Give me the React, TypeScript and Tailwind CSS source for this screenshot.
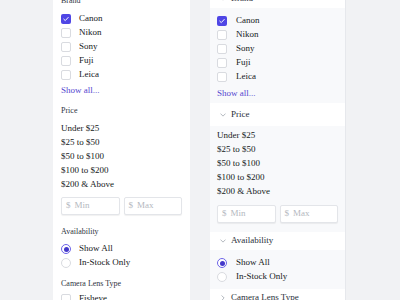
import type { ReactNode } from 'react'

const brands = ['Canon', 'Nikon', 'Sony', 'Fuji', 'Leica']
const prices = ['Under $25', '$25 to $50', '$50 to $100', '$100 to $200', '$200 & Above']

function Checkbox({ checked }: { checked?: boolean }) {
  return checked ? (
    <span className="w-[10px] h-[10px] rounded-[2px] bg-[#4f46e5] flex items-center justify-center shrink-0">
      <svg viewBox="0 0 10 10" className="w-[8px] h-[8px]">
        <path d="M2.2 5.2 L4.1 7 L7.8 3" fill="none" stroke="#fff" strokeWidth="1.2" strokeLinecap="round" strokeLinejoin="round" />
      </svg>
    </span>
  ) : (
    <span className="w-[10px] h-[10px] rounded-[2px] bg-white border border-[#d9dbe0] shrink-0" />
  )
}

function Radio({ checked }: { checked?: boolean }) {
  return (
    <span
      className={`w-[10px] h-[10px] rounded-full bg-white border flex items-center justify-center shrink-0 ${
        checked ? 'border-[#6d64e8]' : 'border-[#d9dbe0]'
      }`}
    >
      {checked && <span className="w-[5px] h-[5px] rounded-full bg-[#4338ca]" />}
    </span>
  )
}

function Row({ children, className = '' }: { children: ReactNode; className?: string }) {
  return <div className={`h-[14px] flex items-center gap-[8px] ${className}`}>{children}</div>
}

function PriceInputs({ className = '' }: { className?: string }) {
  return (
    <div className={`flex gap-[4px] ${className}`}>
      {['Min', 'Max'].map(p => (
        <div
          key={p}
          className="flex-1 h-[18px] bg-white border border-[#e3e5e9] rounded-[2px] shadow-[0_1px_1px_rgba(0,0,0,0.06)] flex items-center px-[4px] gap-[4px] text-[#b4b8c0]"
        >
          <span>$</span>
          <span>{p}</span>
        </div>
      ))}
    </div>
  )
}

function Chevron({ open }: { open?: boolean }) {
  return (
    <svg viewBox="0 0 8 8" className="w-[6px] h-[6px]">
      <path
        d={open ? 'M1 2.5 L4 5.5 L7 2.5' : 'M2.5 1 L5.5 4 L2.5 7'}
        fill="none"
        stroke="#9aa0aa"
        strokeWidth="1"
        strokeLinecap="round"
        strokeLinejoin="round"
      />
    </svg>
  )
}

function Header({ title, open, className = '' }: { title: string; open?: boolean; className?: string }) {
  return (
    <div className={`bg-white flex items-center gap-[5px] pl-[10px] text-[#2a2f3a] ${className}`}>
      <Chevron open={open} />
      <span>{title}</span>
    </div>
  )
}

function LeftCard() {
  return (
    <div className="w-[137px] h-full bg-white px-[8px] overflow-hidden">
      <div className="-mt-[5px] flex flex-col">
        <div className="h-[12px] flex items-center text-[8px] text-[#30353f]">Brand</div>
        <div className="mt-[5px]">
          {brands.map((b, i) => (
            <Row key={b}>
              <Checkbox checked={i === 0} />
              <span>{b}</span>
            </Row>
          ))}
        </div>
        <div className="mt-[2px] h-[14px] flex items-center text-[#5446cf]">Show all...</div>
        <div className="mt-[7px] h-[12px] flex items-center text-[8px] text-[#30353f]">Price</div>
        <div className="mt-[5px]">
          {prices.map(p => (
            <div key={p} className="h-[14px] flex items-center">{p}</div>
          ))}
        </div>
        <PriceInputs className="mt-[5px]" />
        <div className="mt-[11px] h-[12px] flex items-center text-[8px] text-[#30353f]">Availability</div>
        <div className="mt-[4px]">
          <Row>
            <Radio checked />
            <span>Show All</span>
          </Row>
          <Row>
            <Radio />
            <span>In-Stock Only</span>
          </Row>
        </div>
        <div className="mt-[8px] h-[12px] flex items-center text-[8px] text-[#30353f]">Camera Lens Type</div>
        <Row className="mt-[2px]">
          <Checkbox />
          <span>Fisheye</span>
        </Row>
      </div>
    </div>
  )
}

function RightCard() {
  return (
    <div className="w-[136px] h-full bg-[#f8f9fb] border-r border-[#e6e8ec] overflow-hidden">
      <div className="-mt-[10px] flex flex-col">
        <Header title="Brand" open className="h-[18px]" />
        <div className="mt-[6px] px-[7px]">
          {brands.map((b, i) => (
            <Row key={b} className="gap-[9px]">
              <Checkbox checked={i === 0} />
              <span>{b}</span>
            </Row>
          ))}
          <div className="mt-[3px] h-[14px] flex items-center text-[#5446cf]">Show all...</div>
        </div>
        <Header title="Price" open className="mt-[2px] h-[23px]" />
        <div className="mt-[3px] px-[7px]">
          {prices.map(p => (
            <div key={p} className="h-[14px] flex items-center">{p}</div>
          ))}
          <PriceInputs className="mt-[6px]" />
        </div>
        <Header title="Availability" open className="mt-[9px] h-[18px]" />
        <div className="mt-[6px] px-[7px]">
          <Row className="gap-[9px]">
            <Radio checked />
            <span>Show All</span>
          </Row>
          <Row className="gap-[9px]">
            <Radio />
            <span>In-Stock Only</span>
          </Row>
        </div>
        <Header title="Camera Lens Type" className="mt-[5px] h-[18px]" />
      </div>
    </div>
  )
}

export default function App() {
  return (
    <div
      className="w-[400px] h-[300px] overflow-hidden bg-[#f1f2f4] flex gap-[20px] pl-[53px] text-[9px] text-[#151922]"
      style={{ fontFamily: '"Liberation Serif", serif' }}
    >
      <LeftCard />
      <RightCard />
    </div>
  )
}
